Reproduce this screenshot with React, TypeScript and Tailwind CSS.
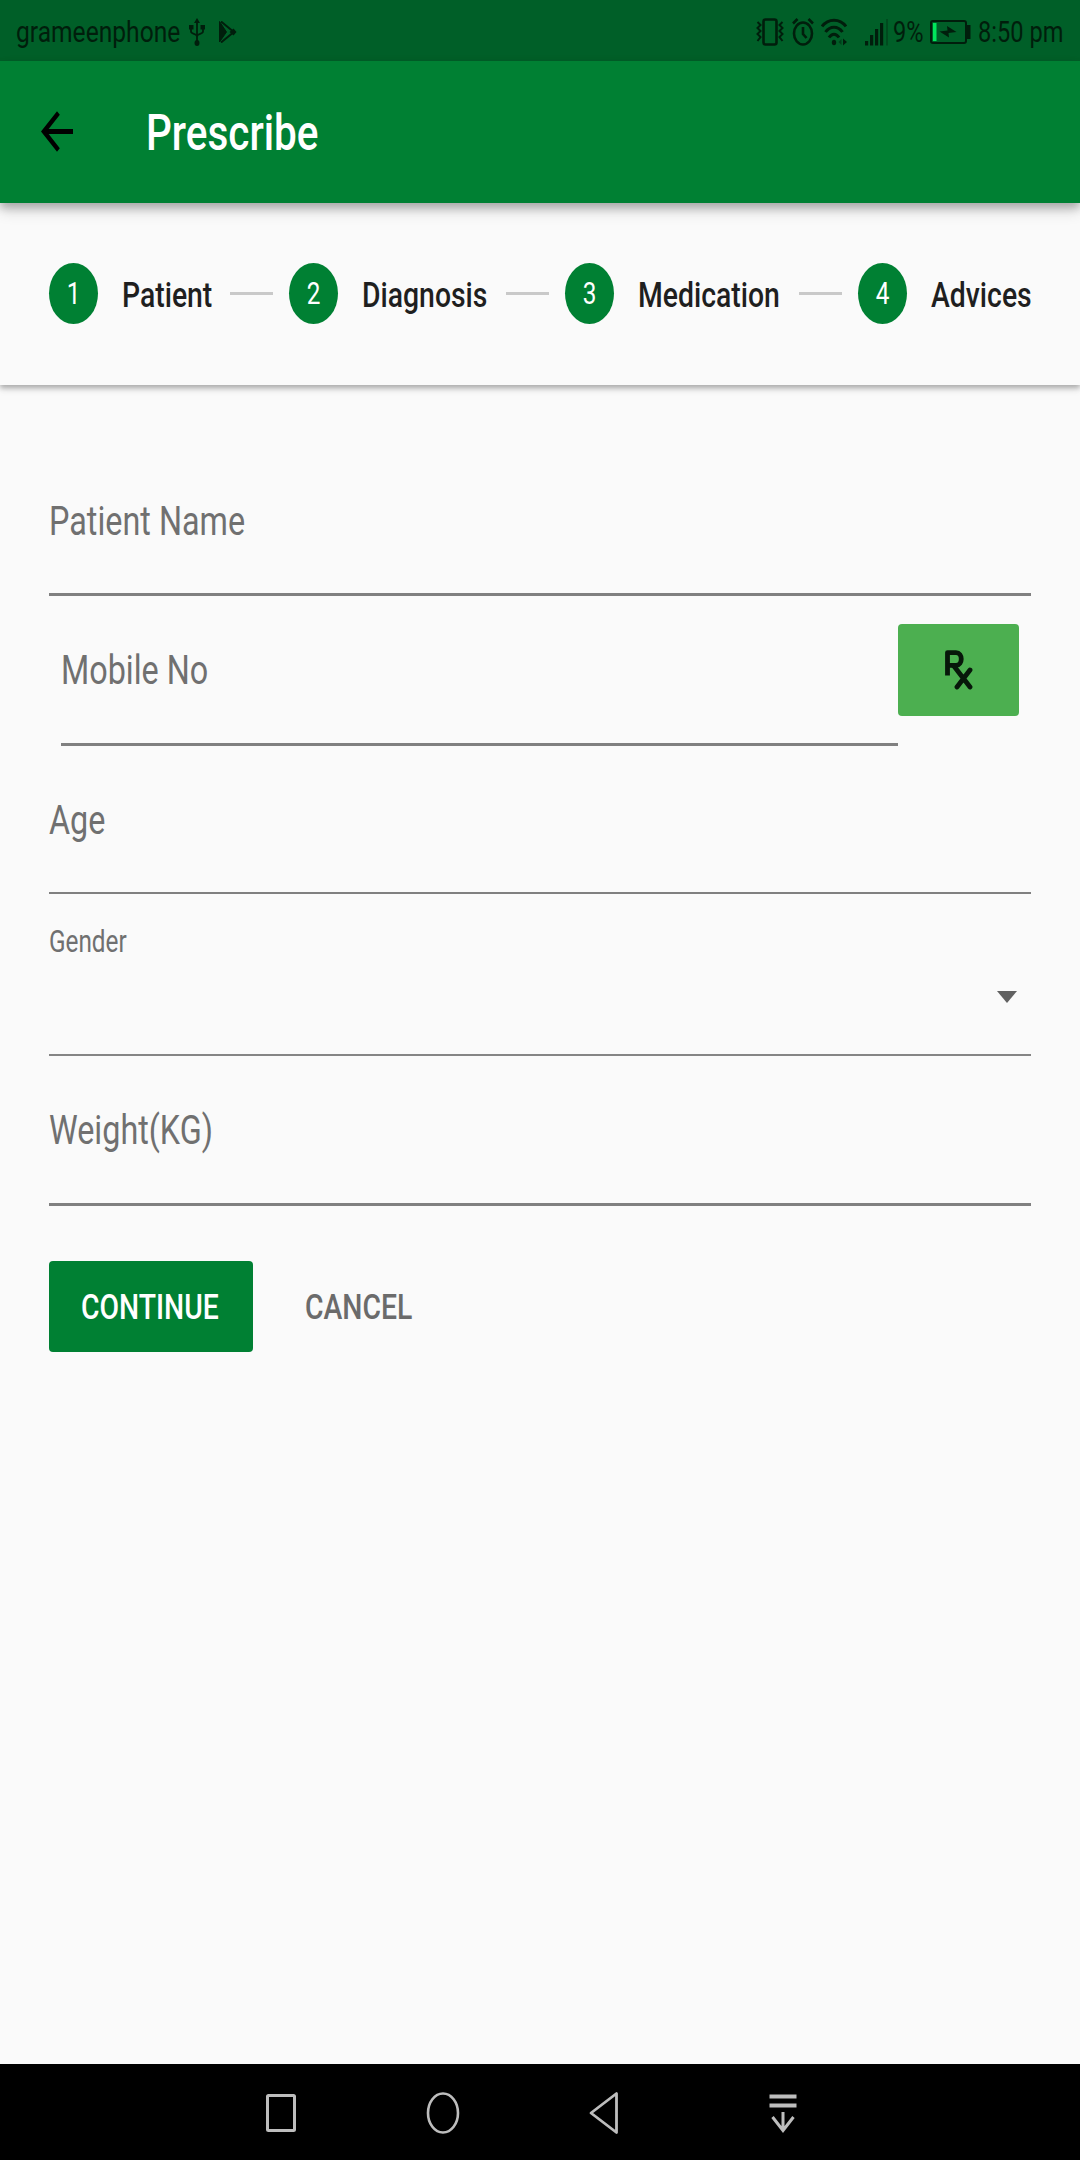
import { Fragment, type ReactNode } from "react";
import clsx from "clsx";
import { MdArrowBack } from "react-icons/md";

const steps = [
    { label: "Patient", width: "w-[92px]" },
    { label: "Diagnosis", width: "w-[128px]" },
    { label: "Medication", width: "w-[145px]" },
    { label: "Advices", width: "w-[102px]" },
];

// Narrow text, the box keeps its own width so the squeeze doesn't shift neighbours
const Narrow = ({ children, className = "scale-x-[0.797]" }: { children: ReactNode; className?: string }) => (
    <span className={clsx("inline-block origin-left whitespace-nowrap", className)}>{children}</span>
);

const StatusBar = () => (
    <div className="flex h-[61px] items-center bg-[#005f28] pt-0.5 text-[30px] leading-none text-[#001e0c]">
        <div className="ml-4 w-[168px]">
            <Narrow className="scale-x-[0.82]">grameenphone</Narrow>
        </div>
        <svg viewBox="0 0 16 28" className="ml-[5px] h-7 w-4" fill="none" stroke="currentColor" strokeWidth="1.800">
            <path d="M8 4v20M2 9v4.500c0 3 6 1.500 6 5M14 9v4.500c0 3-6 1.500-6 5" />
            <path d="M8 0l3 5H5z" fill="currentColor" stroke="none" />
            <ellipse cx="8" cy="25" rx="2.500" ry="3" fill="currentColor" stroke="none" />
            <path d="M0 7h4.500v4.500H0zM11.500 7H16v4.500h-4.500z" fill="currentColor" stroke="none" />
        </svg>
        <svg viewBox="0 0 18 22" className="ml-[14px] h-[22px] w-[18px]" fill="none" stroke="currentColor">
            <path d="M0.500 0.500v20.500L7.500 11z" fill="currentColor" />
            <path d="M2 0.500l11 9M2 21.500l11-9" strokeWidth="2" />
            <path d="M10.500 11l4-3.500 3 3.500-3 3.500z" fill="currentColor" stroke="none" />
        </svg>

        <div className="mr-[18px] ml-auto flex items-center">
            <svg viewBox="0 0 28 28" className="h-7 w-7" fill="none" stroke="currentColor" strokeWidth="2.600">
                <rect x="7.500" y="1.500" width="13" height="25" rx="2" />
                <path d="M1.500 4l3 3-3 3 3 3-3 3 3 3-3 4M26.500 4l-3 3 3 3-3 3 3 3-3 3 3 4" strokeWidth="2" />
            </svg>
            <svg viewBox="0 0 22 28" className="ml-2 h-7 w-[22px]" fill="none" stroke="currentColor" strokeWidth="2.600">
                <ellipse cx="11" cy="15.500" rx="9" ry="11" />
                <path d="M11 9v7l3.500 4M1 5.500L5.500 1M21 5.500L16.500 1" />
            </svg>
            <svg viewBox="0 0 26 28" className="ml-[7px] h-7 w-[26px]" fill="none" stroke="currentColor" strokeWidth="3">
                <path d="M1 8.500C7 0 19 0 25 8.500M4.500 14C9 7.500 17 7.500 21.500 14M8 19.500c3-4.500 7-4.500 10 0" />
                <ellipse cx="13" cy="24.500" rx="2.200" ry="2.800" fill="currentColor" stroke="none" />
                <path d="M22 20.500v7l4-3.500z" fill="currentColor" stroke="none" />
                <path d="M20.500 21v6l-3-3z" fill="currentColor" stroke="none" opacity="0.5" />
            </svg>
            <svg viewBox="0 0 24 28" className="ml-[18px] h-7 w-6" fill="currentColor">
                <rect y="23" width="3.200" height="4.500" />
                <rect x="5" y="17" width="3.200" height="10.500" />
                <rect x="10" y="11" width="3.200" height="16.500" />
                <rect x="15" y="5" width="3.200" height="22.500" />
                <rect x="21" y="1" width="2" height="26.500" opacity="0.3" />
            </svg>
            <div className="ml-1 w-[34px]">
                <Narrow className="scale-x-[0.787]">9%</Narrow>
            </div>
            <svg viewBox="0 0 41 26" className="ml-[3px] h-[26px] w-[41px]" fill="none">
                <rect x="1" y="2" width="35" height="22" rx="2" stroke="currentColor" strokeWidth="2" />
                <rect x="3" y="4" width="3.500" height="18" fill="#00e65c" />
                <path d="M37 6h3.500v14H37" fill="currentColor" />
                <path d="M9.500 12.500l8-1-.500-4.500 9.500 6-8 1 .5 4.500z" fill="currentColor" />
            </svg>
            <div className="ml-[7px] w-[84px]">
                <Narrow className="scale-x-[0.787]">8:50 pm</Narrow>
            </div>
        </div>
    </div>
);

const AppBar = () => (
    <header className="relative z-20 flex h-[142px] items-center bg-[#008033] shadow-[0_5px_8px_0_rgba(0,0,0,0.22),0_8px_14px_0_rgba(0,0,0,0.14)]">
        <MdArrowBack preserveAspectRatio="none" className="mb-[2px] ml-[33px] h-[61px] w-12 text-black" />
        <h1 className="mt-[3px] ml-[65px] text-[50.8px] leading-none font-medium text-white">
            <Narrow>Prescribe</Narrow>
        </h1>
    </header>
);

const Stepper = () => (
    <div className="relative z-10 flex h-[182px] items-center bg-[#fafafa] pr-[47px] pb-px pl-[49px] shadow-[0_3px_5px_0_rgba(0,0,0,0.25),0_4px_8px_0_rgba(0,0,0,0.1)]">
        {steps.map((step, i) => (
            <Fragment key={step.label}>
                {i > 0 && <div className="mx-4 h-[3px] flex-1 bg-[#c9c9c9]" />}
                <div className="flex h-[61px] w-[49px] shrink-0 items-center justify-center rounded-[50%] bg-[#008033] pt-0.5 text-[30.5px] leading-none text-white">
                    <span className="scale-x-[0.797]">{i + 1}</span>
                </div>
                <div className={clsx("mt-1 ml-6 shrink-0 text-[35.6px] leading-none font-medium text-[#1f1f1f]", step.width)}>
                    <Narrow>{step.label}</Narrow>
                </div>
            </Fragment>
        ))}
    </div>
);

const Field = ({ label, className }: { label: string; className?: string }) => (
    <div className={clsx("flex items-center border-[#808080] text-[40.6px] leading-none text-[#707070]", className)}>
        <Narrow>{label}</Narrow>
    </div>
);

const RxIcon = () => (
    <svg viewBox="0 0 28 40" className="h-10 w-7 text-[#07170a]" fill="none" stroke="currentColor" strokeWidth="4.800" strokeLinejoin="round">
        <path d="M2.500 25.500V2.600H11C18 2.600 18 15.400 11 15.400H2.500" />
        <path d="M8.500 15.500L25 37M25 20L12 37" strokeLinecap="round" />
    </svg>
);

const PatientForm = () => (
    <main className="flex-1 bg-[#fafafa] px-[49px] pt-[62px]">
        <Field label="Patient Name" className="h-[149px] border-b-3 pt-[3px]" />
        <div className="flex items-start px-3">
            <Field label="Mobile No" className="h-[150px] flex-1 border-b-3 pt-px" />
            <button className="mt-[28px] flex h-[92px] w-[121px] items-center justify-center rounded-[4px] bg-[#4caf50]">
                <RxIcon />
            </button>
        </div>
        <Field label="Age" className="h-[148px] border-b-2 pt-[3px]" />
        <div className="flex h-[162px] flex-col border-b-2 border-[#858585] pt-[33px] pr-[14px] text-[30.5px] leading-none text-[#707070]">
            <Narrow className="scale-x-[0.797] self-start">Gender</Narrow>
            <svg viewBox="0 0 20 12" className="mt-[33px] h-3 w-5 self-end" fill="#616161">
                <path d="M0 0h20L10 12z" />
            </svg>
        </div>
        <Field label="Weight(KG)" className="h-[150px] border-b-3 pt-px" />
        <div className="mt-[55px] flex items-center text-[35.6px] leading-none font-medium">
            <button className="h-[91px] w-[204px] rounded-[4px] bg-[#008033] pt-[3px] pl-8 text-left text-white">
                <Narrow>CONTINUE</Narrow>
            </button>
            <button className="mt-[3px] ml-[52px] text-[#6b6b6b]">
                <Narrow>CANCEL</Narrow>
            </button>
        </div>
    </main>
);

const NavBar = () => (
    <nav className="flex h-24 items-center bg-black pt-0.5 pl-[265px] text-[#bdbdbd]">
        <svg viewBox="0 0 32 44" className="h-11 w-8" fill="none" stroke="currentColor">
            <rect x="2.500" y="4.500" width="27" height="35" rx="1" strokeWidth="3" />
        </svg>
        <svg viewBox="0 0 34 44" className="ml-[129px] h-11 w-[34px]" fill="none" stroke="currentColor" strokeWidth="2.600">
            <ellipse cx="17" cy="22" rx="15" ry="19.500" />
        </svg>
        <svg viewBox="0 0 30 44" className="ml-[129px] h-11 w-[30px]" fill="none" stroke="currentColor" strokeWidth="2.800" strokeLinejoin="round">
            <path d="M27.500 2.500v39L2 22z" />
        </svg>
        <svg viewBox="0 0 28 44" className="ml-[150px] h-11 w-7" fill="none" stroke="currentColor" strokeWidth="3">
            <path d="M0.500 5.500h27M0.500 14.500h27" strokeWidth="4" />
            <path d="M14 21v18M3.500 26L14 39.500 24.500 26" />
        </svg>
    </nav>
);

export default function App() {
    return (
        <div className="flex h-[2160px] w-[1080px] flex-col overflow-hidden bg-[#fafafa] font-[Roboto,sans-serif]">
            <StatusBar />
            <AppBar />
            <Stepper />
            <PatientForm />
            <NavBar />
        </div>
    );
}
